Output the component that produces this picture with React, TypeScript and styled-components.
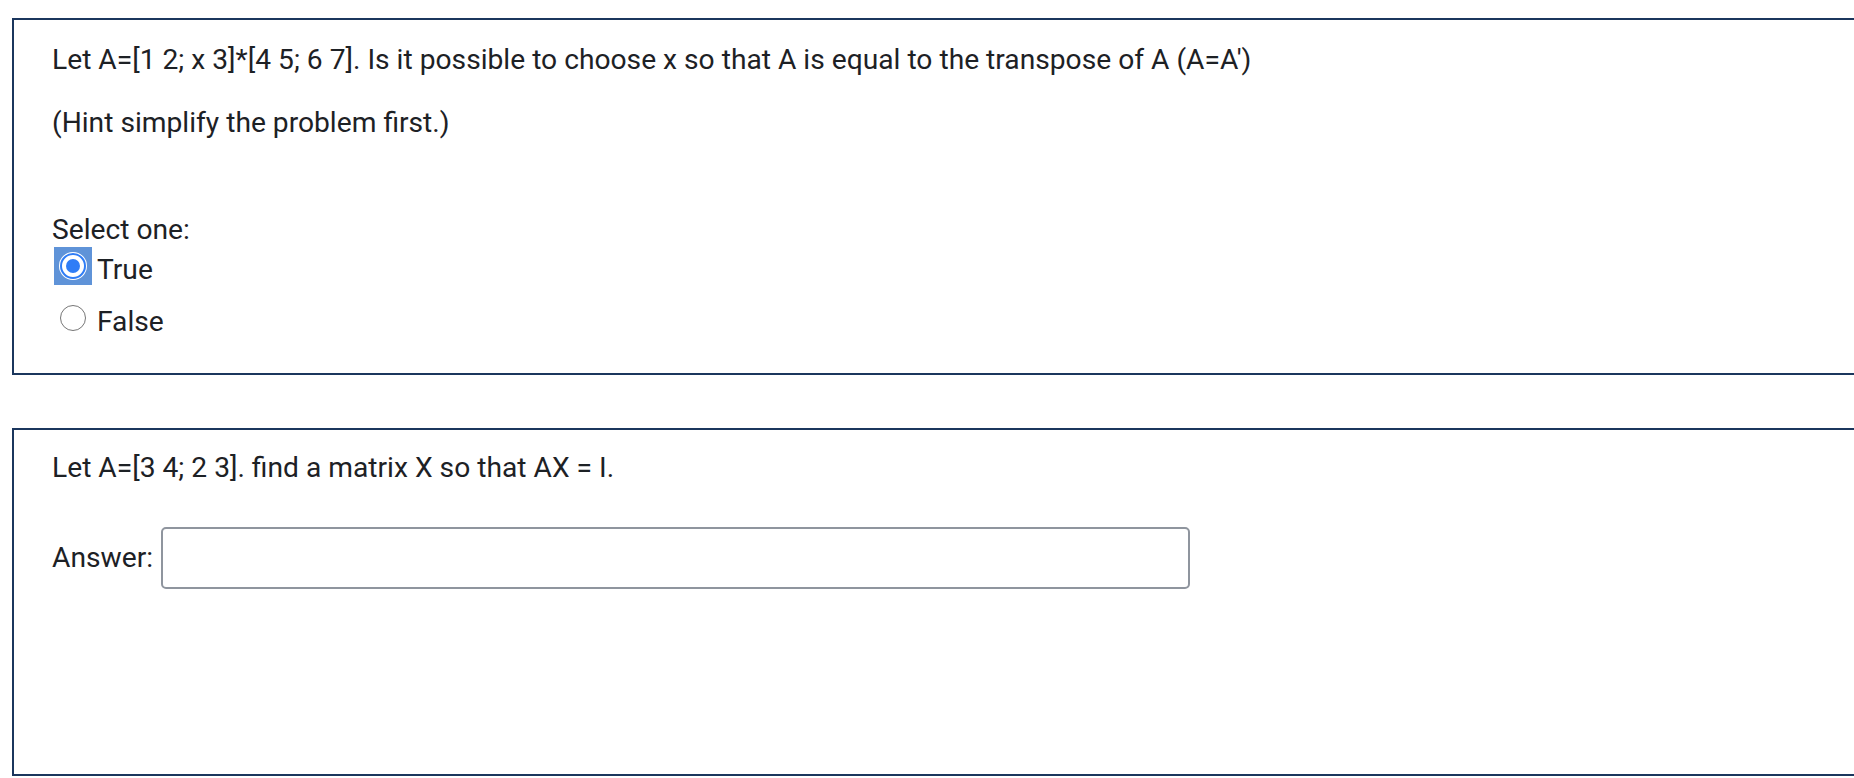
import React from "react";
import styled, { createGlobalStyle } from "styled-components";

const GlobalStyle = createGlobalStyle`
  html, body {
    margin: 0;
    padding: 0;
    background: #ffffff;
    overflow: hidden;
  }
  body {
    font-family: Roboto, "Liberation Sans", Arial, sans-serif;
    font-size: 28.2px;
    color: #1d2125;
  }
`;

const Page = styled.div`
  padding: 18px 0 0 12px;
`;

const QuestionBox = styled.div<{ $top: number; $bottom: number; $minHeight?: number }>`
  width: calc(100vw + 20px);
  box-sizing: border-box;
  border: 2px solid #1b365d;
  padding: ${(p) => p.$top}px 38px ${(p) => p.$bottom}px;
  margin-bottom: 53px;
  min-height: ${(p) => (p.$minHeight ? `${p.$minHeight}px` : "auto")};
`;

const Para = styled.p<{ $gap: number }>`
  margin: 0 0 ${(p) => p.$gap}px;
  line-height: 42px;
`;

const Prompt = styled.div`
  line-height: 34px;
`;

const Options = styled.div`
  display: flex;
  flex-direction: column;
  gap: 14px;
`;

const OptionRow = styled.label`
  display: flex;
  align-items: center;
  height: 38px;
  padding-left: 2px;
`;

const FocusRing = styled.span<{ $focused?: boolean }>`
  width: 38px;
  height: 38px;
  display: flex;
  align-items: center;
  justify-content: center;
  background: ${(p) => (p.$focused ? "#5f93d8" : "transparent")};
`;

const Radio = styled.span<{ $checked?: boolean }>`
  width: 26px;
  height: 26px;
  box-sizing: border-box;
  border-radius: 50%;
  background: #ffffff;
  border: ${(p) => (p.$checked ? "2.5px solid #2f7df6" : "1.5px solid #767676")};
  display: flex;
  align-items: center;
  justify-content: center;
  box-shadow: ${(p) => (p.$checked ? "0 0 0 1px #ffffff" : "none")};

  &::after {
    content: "";
    display: ${(p) => (p.$checked ? "block" : "none")};
    width: 14px;
    height: 14px;
    border-radius: 50%;
    background: #2f7df6;
  }
`;

const OptionText = styled.span`
  margin-left: 5px;
  line-height: 38px;
  padding-top: 7px;
`;

const AnswerRow = styled.div`
  display: flex;
  align-items: center;
  margin-top: 38px;
`;

const AnswerLabel = styled.span`
  line-height: 42px;
`;

const AnswerInput = styled.input`
  width: 1029px;
  height: 62px;
  box-sizing: border-box;
  margin-left: 8px;
  border: 2px solid #8f959e;
  border-radius: 5px;
  font: inherit;
  padding: 0 12px;
  outline: none;
`;

export default function App() {
  return (
    <>
      <GlobalStyle />
      <Page>
        <QuestionBox $top={19} $bottom={36}>
          <Para $gap={21}>
            Let A=[1 2; x 3]*[4 5; 6 7]. Is it possible to choose x so that A is equal to the transpose of A (A=A')
          </Para>
          <Para $gap={69}>(Hint simplify the problem first.)</Para>
          <Prompt>Select one:</Prompt>
          <Options>
            <OptionRow>
              <FocusRing $focused>
                <Radio $checked />
              </FocusRing>
              <OptionText>True</OptionText>
            </OptionRow>
            <OptionRow>
              <FocusRing>
                <Radio />
              </FocusRing>
              <OptionText>False</OptionText>
            </OptionRow>
          </Options>
        </QuestionBox>
        <QuestionBox $top={17} $bottom={0} $minHeight={348}>
          <Para $gap={0}>Let A=[3 4; 2 3]. find a matrix X so that AX = I.</Para>
          <AnswerRow>
            <AnswerLabel>Answer:</AnswerLabel>
            <AnswerInput type="text" />
          </AnswerRow>
        </QuestionBox>
      </Page>
    </>
  );
}
